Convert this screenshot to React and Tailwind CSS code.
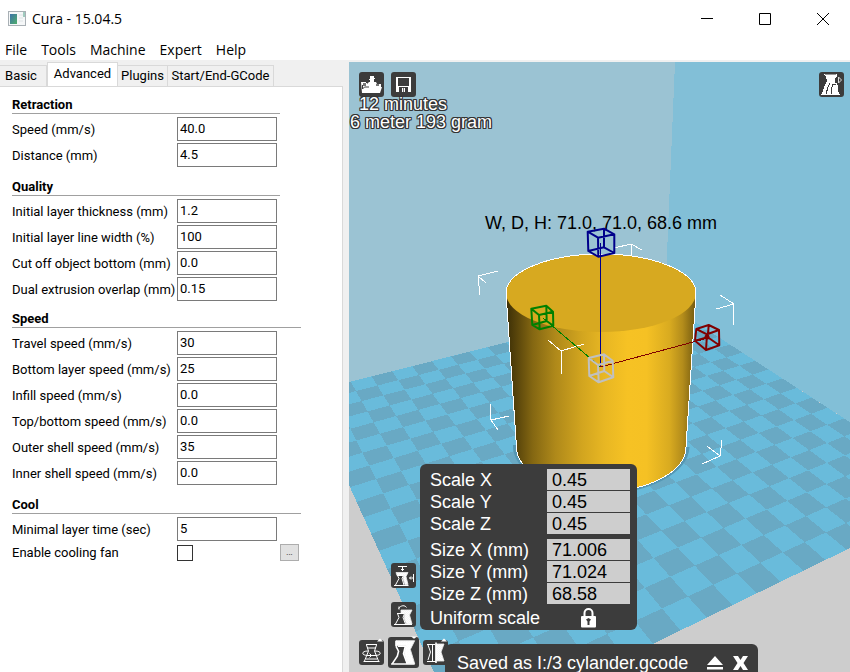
import React from 'react';

const menus = ['File', 'Tools', 'Machine', 'Expert', 'Help'];

const tabs = [
  { name: 'Basic', width: 'w-[47px] pr-1' },
  { name: 'Advanced', width: 'w-[71px]' },
  { name: 'Plugins', width: 'w-[50px]' },
  { name: 'Start/End-GCode', width: 'w-[106px]' },
];

const sections = [
  {
    title: 'Retraction',
    spacing: '',
    rule: 'w-[268px]',
    fields: [['Speed (mm/s)', '40.0'], ['Distance (mm)', '4.5']],
  },
  {
    title: 'Quality',
    spacing: 'mt-2.5',
    rule: 'w-[268px]',
    fields: [
      ['Initial layer thickness (mm)', '1.2'],
      ['Initial layer line width (%)', '100'],
      ['Cut off object bottom (mm)', '0.0'],
      ['Dual extrusion overlap (mm)', '0.15'],
    ],
  },
  {
    title: 'Speed',
    spacing: 'mt-2',
    rule: 'w-[289px]',
    fields: [
      ['Travel speed (mm/s)', '30'],
      ['Bottom layer speed (mm/s)', '25'],
      ['Infill speed (mm/s)', '0.0'],
      ['Top/bottom speed (mm/s)', '0.0'],
      ['Outer shell speed (mm/s)', '35'],
      ['Inner shell speed (mm/s)', '0.0'],
    ],
  },
  {
    title: 'Cool',
    spacing: 'mt-2.5',
    rule: 'w-[289px]',
    fields: [['Minimal layer time (sec)', '5']],
  },
];

const scaleFields = [['Scale X', '0.45'], ['Scale Y', '0.45'], ['Scale Z', '0.45']];
const sizeFields = [['Size X (mm)', '71.006'], ['Size Y (mm)', '71.024'], ['Size Z (mm)', '68.58']];

// Perspective projection of the build plate, u and v run from 0 to 1
function project(u, v) {
  const w = 1 + 0.2501 * u - 0.4298 * v;
  const x = (307 + 524.3 * u - 43 * v) / w;
  const y = (392.6 - 14.4 * u + 27.1 * v) / w;
  return `${x.toFixed(1)},${y.toFixed(1)}`;
}

function quad(u0, v0, u1, v1) {
  return [project(u0, v0), project(u1, v0), project(u1, v1), project(u0, v1)].join(' ');
}

const TILES = 20;
const darkTiles = [];
for (let i = 0; i < TILES; i++) {
  for (let j = 0; j < TILES; j++) {
    if ((i + j) % 2 === 1) {
      darkTiles.push(quad(i / TILES, j / TILES, (i + 1) / TILES, (j + 1) / TILES));
    }
  }
}

const cubes = [
  { color: '#00008b', top: [[587.7, 231.7], [604, 228.7], [614.3, 234.3], [598, 237.7]], bottom: [[588.3, 251], [604, 247.3], [614.3, 253], [598.3, 256.7]] },
  { color: '#008000', top: [[531.3, 308.7], [546.3, 305.7], [553, 311.7], [539, 315]], bottom: [[532.3, 325], [546.7, 321], [553.3, 325.7], [539.7, 329.3]] },
  { color: '#800000', top: [[696.3, 329], [708.7, 325], [719, 330], [707, 334.3]], bottom: [[695, 340.7], [707.7, 337.3], [719.3, 345.3], [706, 350]] },
  { color: '#c0c0c0', top: [[588.7, 358], [604, 354.3], [612.7, 360.7], [598, 365]], bottom: [[589.3, 376], [604.3, 371], [613.3, 377.3], [598.7, 382.3]] },
];

function Cube({ color, top, bottom }) {
  const sides = top.map((p, i) => `M${p}L${bottom[i]}`).join('');
  return <path d={`M${top.join('L')}ZM${bottom.join('L')}Z${sides}`} fill="none" stroke={color} strokeWidth="2" strokeLinejoin="round" />;
}

function Scene() {
  return (
    <svg viewBox="349 62 501 610" preserveAspectRatio="xMidYMid slice" className="absolute inset-0 h-full w-full" aria-label="Build plate">
      <defs>
        <linearGradient id="side" gradientUnits="userSpaceOnUse" x1="506" y1="0" x2="696" y2="0">
          <stop offset="0" stopColor="#3b2e06" />
          <stop offset="0.06" stopColor="#5a460b" />
          <stop offset="0.14" stopColor="#846712" />
          <stop offset="0.26" stopColor="#af891a" />
          <stop offset="0.4" stopColor="#d2a51f" />
          <stop offset="0.52" stopColor="#e8b723" />
          <stop offset="0.64" stopColor="#f6c224" />
          <stop offset="0.74" stopColor="#f5c124" />
          <stop offset="0.86" stopColor="#d9ab20" />
          <stop offset="0.93" stopColor="#b38c1b" />
          <stop offset="1" stopColor="#725910" />
        </linearGradient>
      </defs>
      <g shapeRendering="crispEdges">
        <rect x="349" y="62" width="501" height="610" fill="#cdcdcd" />
        <polygon points="349,62 675,62 665,302.5 307,392.6" fill="#9bc3d3" />
        <polygon points="675,62 1000,62 961,494 665,302.5" fill="#82bfd7" />
        <polygon points={quad(0, 0, 1, 1)} fill="#69bbdb" />
        {darkTiles.map((points) => (
          <polygon key={points} points={points} fill="#69a9c4" />
        ))}
      </g>
      <path d="M514.500 445A86.500 46 0 0 0 688 447" fill="none" stroke="#5597b3" strokeWidth="3" />
      <path d="M506 293A95 39 0 0 1 696 293L686 447A84.5 44.5 0 0 1 516.5 447Z" fill="url(#side)" />
      <ellipse cx="601" cy="293" rx="95" ry="39" fill="#d7a920" />
      <path
        d="M506 293A95 39 0 0 1 696 293L686 447A84.5 44.5 0 0 1 516.5 447Z"
        fill="none"
        stroke="#fff"
        strokeWidth="1"
        shapeRendering="crispEdges"
      />
      <path
        d="M498 271L478 276L486 283M478 276L480 295M614 248L631 244L642 250M631 244V255M720 295L734 304L716 309M734 304L733 325M548 340L561 351L584 344M561 351L562 374M490 404L491 420L509 416M491 420L498 430M722 440L720 456L707 446M720 456L702 464"
        fill="none"
        stroke="#fff"
        strokeWidth="1"
        shapeRendering="crispEdges"
      />
      <text x="485" y="229" fontSize="18" fontFamily="Liberation Sans, Arial, sans-serif" fill="#000">
        W, D, H: 71.0, 71.0, 68.6 mm
      </text>
      <path d="M600.5 367V243" stroke="#00008b" />
      <path d="M600.5 367L543 318" stroke="#008000" shapeRendering="crispEdges" />
      <path d="M600.5 367L708 338" stroke="#800000" shapeRendering="crispEdges" />
      {cubes.map((cube) => (
        <Cube key={cube.color} {...cube} />
      ))}
      <circle cx="707" cy="337" r="2.5" fill="#800000" />
    </svg>
  );
}

function ToolButton({ label, size = 'size-[25px]', children }) {
  return (
    <button type="button" aria-label={label} className={`${size} shrink-0 rounded-[3px] bg-[#3c3c3c]`}>
      <svg viewBox="0 0 25 25" className="block h-full w-full overflow-visible" fill="none" stroke="#fff">
        {children}
      </svg>
    </button>
  );
}

function Hatch({ id }) {
  return (
    <defs>
      <pattern id={id} width="2" height="2" patternUnits="userSpaceOnUse">
        <rect width="2" height="2" fill="#777" />
        <rect width="1" height="1" fill="#fff" />
        <rect x="1" y="1" width="1" height="1" fill="#fff" />
      </pattern>
    </defs>
  );
}

function LoadIcon() {
  return (
    <g stroke="none" fill="#fff">
      <path d="M11 4h4v2h1v1h-1v3h2l1 2v2H8v-2l2-2h1V8h-1V7h1z" />
      <path d="M2 10h5v1h1v3h10v-2h4v3h1l-2 6H3z" />
      <path d="M4 11h3v3H4zM17 12h3v2h-3z" fill="#777" />
      <path d="M3.500 13v4l2-2H10" fill="none" stroke="#3c3c3c" />
    </g>
  );
}

function SaveIcon() {
  return (
    <g stroke="none">
      <path d="M5 5h15v15H5z" fill="#fff" />
      <path d="M7 6h11v8H7z" fill="#3c3c3c" />
      <path d="M8 15h9v5H8z" fill="#3c3c3c" />
      <path d="M11 16h3v4h-3z" fill="#fff" />
      <path d="M12 16h1v4h-1z" fill="#777" />
    </g>
  );
}

function ViewIcon() {
  return (
    <g stroke="none" fill="#fff" shapeRendering="crispEdges">
      <path d="M5 2h13v2l-2 3v4h2l1 3v3l1 5h1v1H2v-1h1l2-7 3-6-1-4-2-2z" />
      <path d="M6 2h11v1H6z" fill="#999" />
      <path d="M7 22l2-7 2-4M12 22v-5l2-4M13 12.500h4" stroke="#3c3c3c" fill="none" />
      <path d="M19.500 5v6l3-3z" stroke="#ddd" fill="#3c3c3c" shapeRendering="auto" />
    </g>
  );
}

function RotateIcon() {
  return (
    <>
      <path d="M7 4.500h11M7.500 5l2 6-4 10M17.500 5l-2 6 4 10M4.500 21.500h16M8 8h9M7 19h11" />
      <path d="M9 11C2 11 2 15.500 9 15.500h7c7 0 7-4.500 0-4.500M10.500 13.500l2 2-2 2" />
      <path d="M18 1.500l3-3 3 3z" fill="#fff" stroke="none" />
    </>
  );
}

function ScaleIcon() {
  return (
    <>
      <Hatch id="scale-hatch" />
      <path d="M6.500 3h15l-3.500 7 3.500 11.500h-6L13 13l1.500-6h-8z" fill="url(#scale-hatch)" stroke="#eee" strokeWidth="0.7" />
      <path d="M6.500 7.500l2 4-1 4-4 6M8 7.500h6l-1.500 6 3 8M6.500 3v4.500M2.500 21.800h19" strokeWidth="1.3" />
      <path d="M18.500 -.5h5L21 1.500z" fill="#fff" stroke="none" />
    </>
  );
}

function MirrorIcon() {
  return (
    <>
      <Hatch id="mirror-hatch" />
      <path d="M13 4h8l-3 8 3 9h-8z" fill="url(#mirror-hatch)" stroke="#eee" strokeWidth="0.8" />
      <path d="M4 4.500h8M5 5l2.500 7L5 20M4 21.500h9M9.500 5v16" />
      <path d="M13 2.500v20.500" strokeWidth="1.600" />
      <path d="M18 1.500l3-3 3 3z" fill="#fff" stroke="none" />
    </>
  );
}

function ScaleToMaxIcon() {
  return (
    <>
      <Hatch id="max-hatch" />
      <path d="M5 9.500h12l-2 4 2 8h-3l-2-6 1-3H6z" fill="url(#max-hatch)" stroke="#eee" strokeWidth="0.8" />
      <path d="M6 12.500h6.500l-1.500 3 2 6.500M6.500 12.500l1.500 3L4.500 22M3 22.500h14.500" />
      <path d="M7 3.500h9M11.500 4v4M10 6l1.500 1.500L13 6M22.500 11v8M22 15h-3.500M20 13.500L18.500 15l1.500 1.500" />
    </>
  );
}

function ResetScaleIcon() {
  return (
    <>
      <Hatch id="reset-hatch" />
      <path d="M10 8h11l-2.500 5 2.500 9h-5.500L13 16l1-4.500h-4z" fill="url(#reset-hatch)" stroke="#eee" strokeWidth="0.8" />
      <path d="M6 11.500h7.500l-1.500 4 2.500 6.500M6.500 11.500l1.500 4L4.500 22M3 22.500h18" />
      <path d="M8 7.500V4.500M7.500 6.500C10 3 14 3 15.500 5.500" />
    </>
  );
}

function ScalePanel() {
  const row = ([label, value]) => (
    <label key={label} className="flex h-[22px] items-start justify-between">
      <span className="leading-[22px]">{label}</span>
      <input defaultValue={value} className="h-[21px] w-[83px] bg-[#cecece] px-[5px] pt-0.5 text-black outline-none" />
    </label>
  );
  return (
    <div className="absolute bottom-[42px] left-[71px] w-[217px] rounded-md bg-[#3c3c3c] pt-[5px] pr-[7px] pb-px pl-2.5 text-[18px] text-white">
      {scaleFields.map(row)}
      <div className="mt-1">{sizeFields.map(row)}</div>
      <div className="mt-0.5 flex h-[22px] justify-between pr-[33px]">
        <span className="leading-[22px]">Uniform scale</span>
        <button type="button" aria-label="Toggle uniform scale">
          <svg viewBox="0 0 17 20" className="block h-5 w-[17px]">
            <path d="M4.500 9V5a4 4 0 0 1 8 0v4" fill="none" stroke="#fff" strokeWidth="2" />
            <rect x="1" y="8" width="15" height="11.500" rx="1" fill="#fff" />
            <path d="M6 11.500l2.500-1.500 2.500 1.500-1.500 2V17h-2v-3.500z" fill="#3c3c3c" />
          </svg>
        </button>
      </div>
    </div>
  );
}

function Viewport() {
  return (
    <main className="relative min-w-0 flex-1 overflow-hidden bg-[#cdcdcd] font-['Liberation_Sans',Arial,sans-serif]">
      <Scene />
      <div className="relative flex items-start justify-between pt-2.5 pr-1.5 pl-2.5">
        <div className="flex gap-[7px]">
          <ToolButton label="Load"><LoadIcon /></ToolButton>
          <ToolButton label="Save"><SaveIcon /></ToolButton>
        </div>
        <ToolButton label="View mode"><ViewIcon /></ToolButton>
      </div>
      <div className="relative -mt-0.5 text-[18px] leading-[18px] text-white [text-shadow:1px_0_#333,-1px_0_#333,0_1px_#333,0_-1px_#333,1px_1px_#333,-1px_-1px_#333,1px_-1px_#333,-1px_1px_#333]">
        <p className="pl-2.5">12 minutes</p>
        <p className="pl-px">6 meter 193 gram</p>
      </div>

      <div className="absolute bottom-[45px] left-[42px] flex flex-col gap-3.5">
        <ToolButton label="Scale to maximum"><ScaleToMaxIcon /></ToolButton>
        <ToolButton label="Reset scale"><ResetScaleIcon /></ToolButton>
      </div>
      <div className="absolute bottom-1 left-2.5 flex items-center gap-1">
        <ToolButton label="Rotate"><RotateIcon /></ToolButton>
        <ToolButton label="Scale" size="size-[31px]"><ScaleIcon /></ToolButton>
        <ToolButton label="Mirror"><MirrorIcon /></ToolButton>
      </div>
      <ScalePanel />
      <div className="absolute bottom-0 left-24 flex h-7 w-[313px] items-center rounded-t-md bg-[#3c3c3c] pt-2.5 pr-2.5 pl-3 text-[18px] text-white">
        <span className="flex-1 whitespace-nowrap">Saved as I:/3 cylander.gcode</span>
        <button type="button" aria-label="Eject">
          <svg viewBox="0 0 16 14" className="block h-3.5 w-4" fill="#fff">
            <path d="M8 0l8 9H0zM0 11h16v2.500H0z" />
          </svg>
        </button>
        <button type="button" aria-label="Dismiss" className="ml-2.5">
          <svg viewBox="0 0 15 14" className="block h-3.5 w-[15px]" fill="#fff">
            <path d="M0 0h5l2.500 4L10 0h5l-4.500 7 4.500 7h-5l-2.500-4L5 14H0l4.500-7z" />
          </svg>
        </button>
      </div>
    </main>
  );
}

function SettingsPanel() {
  return (
    <aside className="flex w-[349px] shrink-0 flex-col bg-[#f0f0f0] pr-1.5 font-[Roboto,sans-serif] text-[13px] text-black">
      <div role="tablist" className="relative flex h-6 items-end">
        {tabs.map(({ name, width }) => {
          const active = name === 'Advanced';
          return (
            <button
              key={name}
              type="button"
              role="tab"
              aria-selected={active}
              className={`${width} shrink-0 border-t border-r border-[#d9d9d9] text-center whitespace-nowrap ${
                active ? '-mb-px h-6 self-start border-l bg-white pb-0.5' : 'h-[21px]'
              }`}
            >
              {name}
            </button>
          );
        })}
      </div>
      <div className="flex-1 border-t border-r border-[#d9d9d9] bg-white pt-2 pl-3">
        {sections.map(({ title, spacing, rule, fields }) => (
          <section key={title} className={spacing}>
            <h2 className={`${rule} mb-[3px] h-[19px] border-b border-[#a0a0a0] leading-[20px] font-bold`}>{title}</h2>
            <div className="flex flex-col gap-0.5">
              {fields.map(([label, value]) => (
                <label key={label} className="flex h-6 items-center">
                  <span className="w-[165px] pt-px whitespace-nowrap">{label}</span>
                  <input defaultValue={value} className="h-6 w-[100px] border border-[#7a7a7a] bg-white px-0.5 pb-0.5 outline-none" />
                </label>
              ))}
            </div>
          </section>
        ))}
        <div className="mt-[3px] flex items-center leading-4">
          <label htmlFor="fan" className="w-[165px]">Enable cooling fan</label>
          <input id="fan" type="checkbox" className="size-4 appearance-none border border-[#333] bg-white checked:bg-[#333]" />
          <button type="button" aria-label="Fan settings" className="ml-[87px] h-[17px] w-[19px] border border-[#adadad] bg-[#e1e1e1] text-[8px] leading-3">
            ...
          </button>
        </div>
      </div>
    </aside>
  );
}

export default function App() {
  return (
    <div className="flex min-h-screen flex-col bg-white font-['Open_Sans',sans-serif] text-black">
      <header>
        <div className="flex h-[37px] items-center pr-1 pl-2">
          <svg viewBox="0 0 18 15" className="h-[15px] w-[18px]">
            <defs>
              <linearGradient id="app" x1="0" y1="0" x2="1" y2="1">
                <stop offset="0" stopColor="#3c72a8" />
                <stop offset="1" stopColor="#4fae6b" />
              </linearGradient>
            </defs>
            <rect x=".5" y=".5" width="17" height="14" fill="#f5f7f8" stroke="#a9b0b5" />
            <rect x="2" y="3" width="7" height="10" fill="url(#app)" />
            <path d="M11 4h4M11 7h4M11 10h4" stroke="#dfe4e6" />
            <path d="M16 1v5" stroke="#4b9d85" />
          </svg>
          <h1 className="ml-1.5 flex-1 text-[14px]">Cura - 15.04.5</h1>
          <div className="flex gap-3">
            <button type="button" aria-label="Minimize" className="flex h-8 w-[46px] items-center justify-center">
              <svg viewBox="0 0 12 12" className="size-3" stroke="#000"><path d="M0 5.500h12" /></svg>
            </button>
            <button type="button" aria-label="Maximize" className="flex h-8 w-[46px] items-center justify-center">
              <svg viewBox="0 0 12 12" className="size-3" fill="none" stroke="#000"><path d="M.5 .5h11v11H.5z" /></svg>
            </button>
            <button type="button" aria-label="Close" className="flex h-8 w-[46px] items-center justify-center">
              <svg viewBox="0 0 12 12" className="size-3" stroke="#000"><path d="M0 0l12 12M12 0L0 12" /></svg>
            </button>
          </div>
        </div>
        <nav className="flex h-[23px] items-center gap-3.5 pt-0.5 pl-[5px] text-[14px]">
          {menus.map((name) => (
            <button key={name} type="button">{name}</button>
          ))}
        </nav>
      </header>
      <div className="flex flex-1 border-t-2 border-[#f0f0f0]">
        <SettingsPanel />
        <Viewport />
      </div>
    </div>
  );
}
